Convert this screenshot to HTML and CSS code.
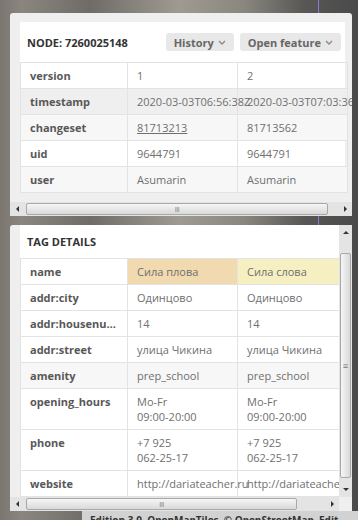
FILE: index.html
```html
<!DOCTYPE html>
<html>
<head>
    <title>Node 7260025148</title>
    <link rel="stylesheet" href="styles.css">
</head>
<body>
    <div class="panel">
        <div class="panel-view node-view">
            <div class="card">
                <div class="card-head">
                    <span class="card-title">NODE: 7260025148</span>
                    <div class="actions">
                        <button class="btn">History <svg width="8" height="5" viewBox="0 0 8 5"><path d="M1 1l3 3 3-3" fill="none" stroke="#888" stroke-width="1.3"/></svg></button>
                        <button class="btn">Open feature <svg width="8" height="5" viewBox="0 0 8 5"><path d="M1 1l3 3 3-3" fill="none" stroke="#888" stroke-width="1.3"/></svg></button>
                    </div>
                </div>
                <table class="diff">
                    <colgroup><col class="c-key"><col class="c-val"><col class="c-val"></colgroup>
                    <tr><th>version</th><td>1</td><td>2</td></tr>
                    <tr class="hl"><th>timestamp</th><td>2020-03-03T06:56:38Z</td><td>2020-03-03T07:03:36Z</td></tr>
                    <tr class="alt"><th>changeset</th><td><a href="#">81713213</a></td><td>81713562</td></tr>
                    <tr><th>uid</th><td>9644791</td><td>9644791</td></tr>
                    <tr class="alt"><th>user</th><td>Asumarin</td><td>Asumarin</td></tr>
                </table>
            </div>
        </div>
        <div class="hbar">
            <span class="arrow left"></span>
            <div class="track"><div class="thumb thumb-node"><span class="grip">III</span></div></div>
            <span class="arrow right"></span>
        </div>
    </div>

    <div class="panel tags">
        <div class="tags-body">
            <div class="panel-view tags-view">
                <div class="card">
                    <div class="card-head">
                        <span class="card-title">TAG DETAILS</span>
                    </div>
                    <table class="diff">
                        <colgroup><col class="c-key"><col class="c-val"><col class="c-val"></colgroup>
                        <tr><th>name</th><td class="old">Сила плова</td><td class="new">Сила слова</td></tr>
                        <tr><th>addr:city</th><td>Одинцово</td><td>Одинцово</td></tr>
                        <tr><th>addr:housenumber</th><td>14</td><td>14</td></tr>
                        <tr><th>addr:street</th><td>улица Чикина</td><td>улица Чикина</td></tr>
                        <tr class="alt"><th>amenity</th><td>prep_school</td><td>prep_school</td></tr>
                        <tr><th>opening_hours</th><td>Mo-Fr<br>09:00-20:00</td><td>Mo-Fr<br>09:00-20:00</td></tr>
                        <tr><th>phone</th><td>+7 925<br>062-25-17</td><td>+7 925<br>062-25-17</td></tr>
                        <tr><th>website</th><td>http://dariateacher.ru</td><td>http://dariateacher.ru</td></tr>
                    </table>
                </div>
            </div>
            <div class="vbar">
                <span class="arrow up"></span>
                <div class="vtrack"><div class="vthumb"><span class="vgrip">≡</span></div></div>
                <span class="arrow down"></span>
            </div>
        </div>
        <div class="hbar">
            <span class="arrow left"></span>
            <div class="track"><div class="thumb thumb-tags"><span class="grip">III</span></div></div>
            <span class="arrow right"></span>
            <span class="corner"></span>
        </div>
    </div>

    <div class="attribution">Edition 3.0 &nbsp;OpenMapTiles &nbsp;© OpenStreetMap &nbsp;Edit</div>
</body>
</html>
```

FILE: styles.css
```css
body {
    margin: 0;
    height: 520px;
    overflow: hidden;
    padding-top: 13px;
    box-sizing: border-box;
    font-family: "Open Sans", sans-serif;
    font-size: 11px;
    color: #6f6f6f;
    background: linear-gradient(to right, #7b7770 0%, #8a867f 6%, #6f6c68 25%, #9e9a91 50%, #8a877f 68%, #585755 85%, #4a4a4a 100%);
}
/* map route line behind the panels */
body::before {
    content: "";
    position: absolute;
    left: 318px;
    top: 0;
    bottom: 0;
    width: 1px;
    background: #8d7ad0;
    z-index: -1;
}
.panel {
    margin-left: 10px;
    width: 342px;
    background: #efefef;
    border-radius: 3px 3px 0 0;
}
.panel.tags {
    margin-top: 9px;
}
.panel-view {
    overflow: hidden;
    padding-left: 10px;
}
.node-view {
    padding-top: 9px;
    padding-bottom: 9px;
}
.tags-body {
    display: flex;
}
.tags-view {
    flex: 1;
    height: 272px;
}
.card {
    width: 325px;
    background: #fff;
}
.card-head {
    display: flex;
    align-items: center;
    height: 40px;
    padding: 0 4px 0 7px;
}
.tags .card-head {
    height: 33px;
}
.card-title {
    font-weight: bold;
    color: #333;
}
.actions {
    margin-left: auto;
    display: flex;
    gap: 6px;
}
.btn {
    display: flex;
    align-items: center;
    gap: 4px;
    height: 18px;
    padding: 0 8px;
    border: none;
    border-radius: 3px;
    background: #e8e8e8;
    color: #666;
    font-family: "Open Sans", sans-serif;
    font-size: 11px;
    font-weight: bold;
}
.diff {
    width: 325px;
    table-layout: fixed;
    border-collapse: collapse;
}
.c-key {
    width: 107px;
}
.c-val {
    width: 110px;
}
.diff th,
.diff td {
    border: 1px solid #e3e3e3;
    padding: 5px 10px;
    line-height: 15px;
    height: 15px;
    white-space: nowrap;
    text-align: left;
    vertical-align: top;
}
.diff th {
    padding-left: 9px;
    color: #585858;
    font-weight: bold;
    overflow: hidden;
    text-overflow: ellipsis;
}
.diff td {
    padding-left: 9px;
}
.diff td a {
    color: #6f6f6f;
}
.diff tr.hl {
    background: #efefef;
}
.diff tr.alt {
    background: #f7f7f7;
}
.diff td.old {
    background: #f2dab0;
}
.diff td.new {
    background: #f6efc2;
}

/* fake gtk-style scrollbars */
.hbar {
    display: flex;
    align-items: center;
    height: 14px;
    background: #e4e4e4;
}
.arrow {
    width: 14px;
    height: 14px;
    display: flex;
    align-items: center;
    justify-content: center;
    flex: none;
}
.arrow::before {
    content: "";
    border: 3px solid transparent;
}
.arrow.left::before {
    border-right: 3px solid #333;
    border-left-width: 0;
}
.arrow.right::before {
    border-left: 3px solid #333;
    border-right-width: 0;
}
.arrow.up::before {
    border-bottom: 3px solid #333;
    border-top-width: 0;
}
.arrow.down::before {
    border-top: 3px solid #333;
    border-bottom-width: 0;
}
.track {
    flex: 1;
    height: 14px;
    display: flex;
    align-items: center;
}
.thumb {
    margin-left: 2px;
    height: 12px;
    box-sizing: border-box;
    border: 1px solid #a8a8a8;
    border-radius: 2px;
    background: linear-gradient(#f6f6f6, #d9d9d9);
    display: flex;
    align-items: center;
    justify-content: center;
}
.thumb-node {
    width: 302px;
}
.thumb-tags {
    width: 271px;
}
.grip {
    font-size: 7px;
    line-height: 7px;
    color: #777;
    letter-spacing: -0.5px;
}
.corner {
    width: 13px;
    height: 14px;
    background: #efefef;
}
.vbar {
    width: 13px;
    height: 272px;
    background: #e4e4e4;
    display: flex;
    flex-direction: column;
}
.vbar .arrow {
    width: 13px;
    height: 15px;
}
.vtrack {
    flex: 1;
}
.vthumb {
    margin: 13px 0 0 1px;
    width: 11px;
    height: 225px;
    box-sizing: border-box;
    border: 1px solid #a8a8a8;
    border-radius: 2px;
    background: linear-gradient(to right, #f6f6f6, #d9d9d9);
    display: flex;
    align-items: center;
    justify-content: center;
}
.vgrip {
    font-size: 9px;
    color: #777;
}
.attribution {
    margin-left: 82px;
    height: 20px;
    padding: 2px 8px;
    background: #d2d2d2;
    color: #333;
    font-size: 10px;
    font-weight: bold;
    white-space: nowrap;
}
```
